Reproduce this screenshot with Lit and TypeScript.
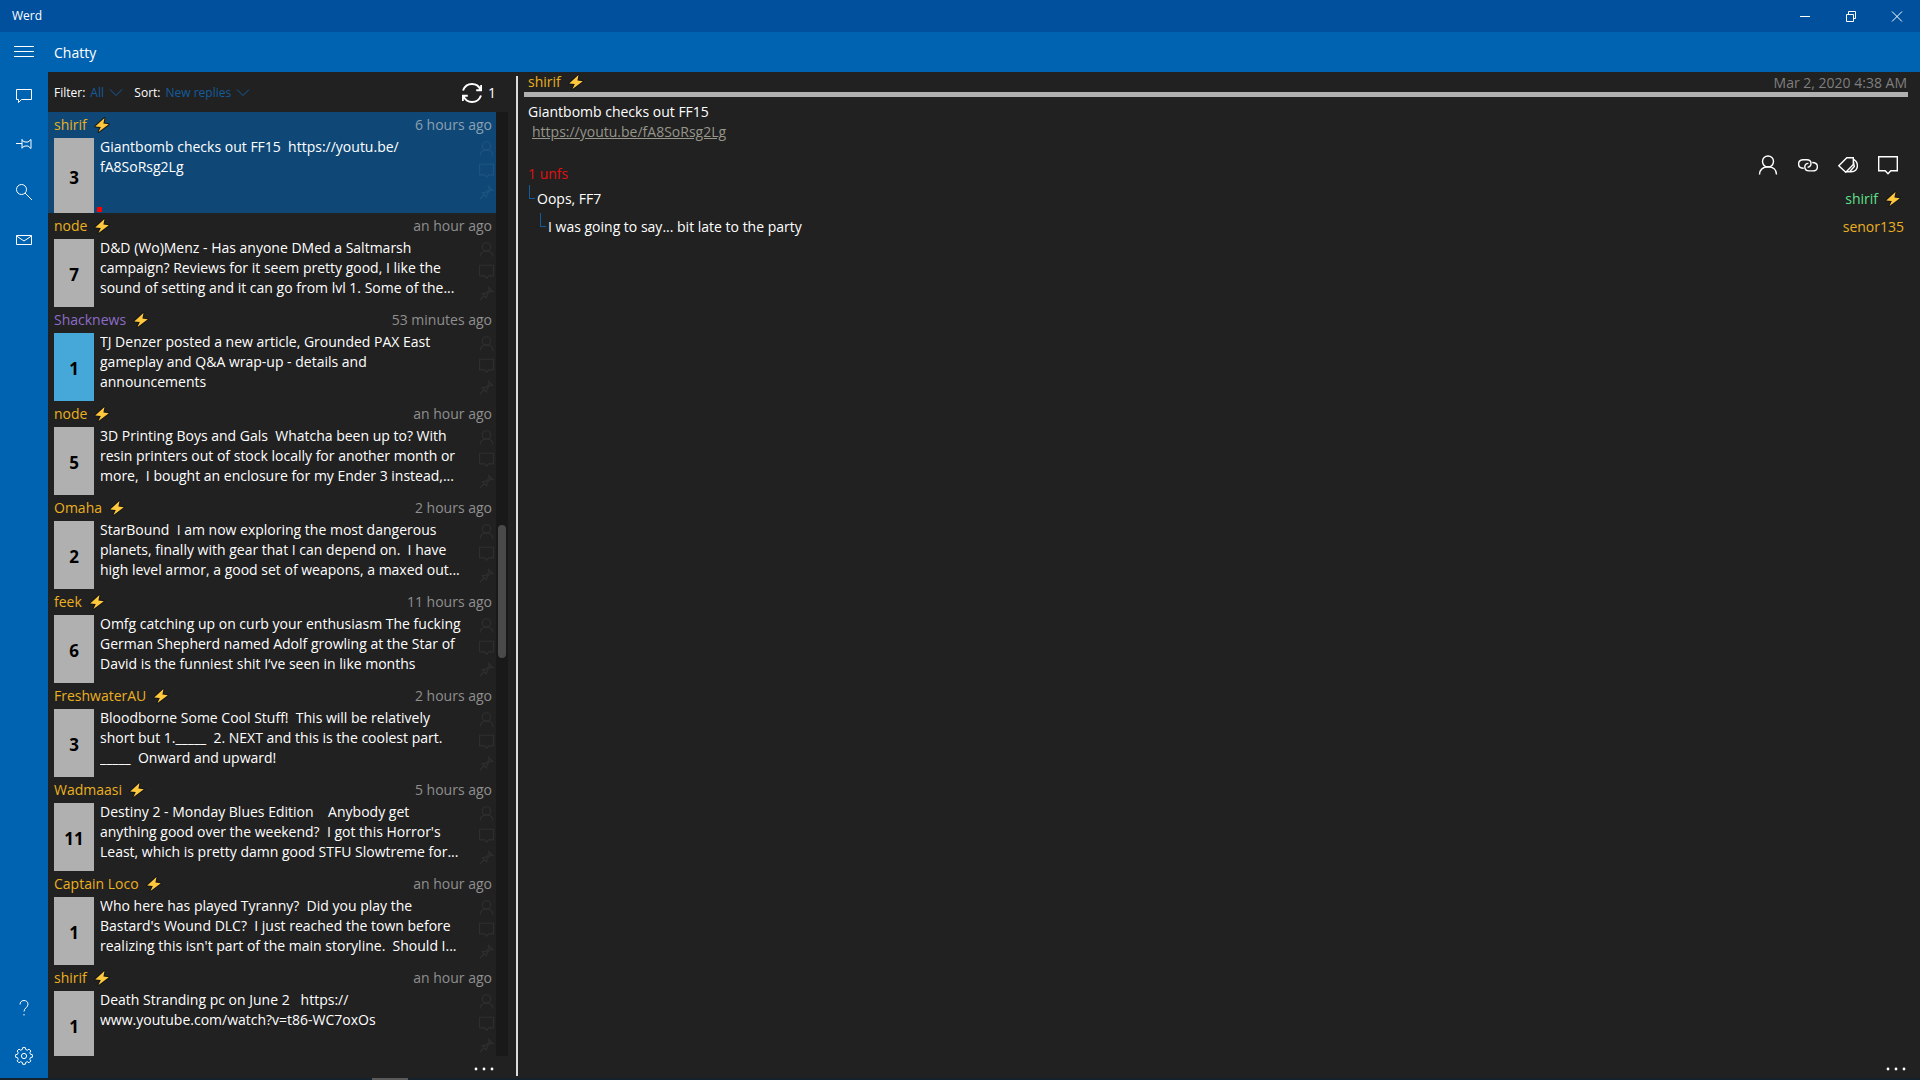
import { LitElement, html, css, svg, nothing } from "lit";
import { customElement, property } from "lit/decorators.js";
import { classMap } from "lit/directives/class-map.js";

interface Thread {
  author: string;
  kind?: string;
  age: string;
  count: number;
  lines: string[];
  selected?: boolean;
}

const threads: Thread[] = [
  { author: "shirif", age: "6 hours ago", count: 3, selected: true, lines: ["Giantbomb checks out FF15  https://youtu.be/", "fA8SoRsg2Lg"] },
  { author: "node", age: "an hour ago", count: 7, lines: ["D&D (Wo)Menz - Has anyone DMed a Saltmarsh", "campaign? Reviews for it seem pretty good, I like the", "sound of setting and it can go from lvl 1. Some of the..."] },
  { author: "Shacknews", kind: "news", age: "53 minutes ago", count: 1, lines: ["TJ Denzer posted a new article, Grounded PAX East", "gameplay and Q&A wrap-up - details and", "announcements"] },
  { author: "node", age: "an hour ago", count: 5, lines: ["3D Printing Boys and Gals  Whatcha been up to? With", "resin printers out of stock locally for another month or", "more,  I bought an enclosure for my Ender 3 instead,..."] },
  { author: "Omaha", age: "2 hours ago", count: 2, lines: ["StarBound  I am now exploring the most dangerous", "planets, finally with gear that I can depend on.  I have", "high level armor, a good set of weapons, a maxed out..."] },
  { author: "feek", age: "11 hours ago", count: 6, lines: ["Omfg catching up on curb your enthusiasm The fucking", "German Shepherd named Adolf growling at the Star of", "David is the funniest shit I‘ve seen in like months"] },
  { author: "FreshwaterAU", age: "2 hours ago", count: 3, lines: ["Bloodborne Some Cool Stuff!  This will be relatively", "short but 1._____  2. NEXT and this is the coolest part.", "_____  Onward and upward!"] },
  { author: "Wadmaasi", age: "5 hours ago", count: 11, lines: ["Destiny 2 - Monday Blues Edition    Anybody get", "anything good over the weekend?  I got this Horror's", "Least, which is pretty damn good STFU Slowtreme for..."] },
  { author: "Captain Loco", age: "an hour ago", count: 1, lines: ["Who here has played Tyranny?  Did you play the", "Bastard's Wound DLC?  I just reached the town before", "realizing this isn't part of the main storyline.  Should I..."] },
  { author: "shirif", age: "an hour ago", count: 1, lines: ["Death Stranding pc on June 2   https://", "www.youtube.com/watch?v=t86-WC7oxOs"] },
];

const shapes = {
  menu: svg`<path d="M0 4.5h20M0 9.5h20M0 14.5h20"/>`,
  chat: svg`<path d="M2.5 3.5h15v10H7.5l-3 3v-3h-2z"/>`,
  pinSide: svg`<path d="M2 9.5h6M8 5v9.500M8 6.500l3 1.500h3l3-2.500v9l-3-2.500h-3l-3 1.500"/>`,
  search: svg`<circle cx="7.500" cy="7.500" r="5"/><path d="M11 11l7 7"/>`,
  mail: svg`<path d="M2.500 5.500h15v9h-15zM2.500 6l7.500 5 7.500-5"/>`,
  help: svg`<path d="M6 6.500C6 4 7.700 2.500 10 2.500s4 1.500 4 3.700c0 3.300-4 3.800-4 7.300M10 16v1.500"/>`,
  gear: svg`<path d="M8.700 1.600h2.600l.4 1.900 1.700.7 1.600-1.100 1.900 1.900-1.100 1.700.7 1.600 1.900.4v2.500l-1.900.4-.7 1.700 1.100 1.600-1.900 1.900-1.600-1.100-1.700.7-.4 1.900H8.700l-.4-1.900-1.700-.7L5 16.800l-1.900-1.900 1.100-1.600-.7-1.700-1.900-.4V8.700l1.900-.4.7-1.600L3.100 5 5 3.100l1.600 1.100 1.700-.7z"/><circle cx="10" cy="10" r="2.600"/>`,
  person: svg`<circle cx="10" cy="6.500" r="5.500"/><path d="M1.500 19.500c0-4.700 3.500-7.700 8.500-7.700s8.500 3 8.500 7.700"/>`,
  link: svg`<path d="M5.800 13.300C2.500 13.300.6 11.600.6 9S2.500 4.700 5.300 4.700h3.600c2.600 0 4.100 1.600 4.100 3.800 0 2-1.400 3.500-3.400 3.700M14.200 7.500c3.300 0 5.200 1.600 5.200 4.200s-1.800 4.200-4.700 4.200h-3.600c-2.600 0-4.300-1.500-4.300-3.800 0-2 1.400-3.600 3.600-3.700"/>`,
  tag: svg`<path d="M.8 10.800l8-8.100h6.500v6.800l-7.500 7.800zM15.300 4.200c2.600 1.500 4.100 3.500 4.100 6.600 0 3.700-2.800 6-6 6H8.500M15.300 6l1 5.500-4.500 5"/>`,
  reply: svg`<path d="M.7 1.700h18.600v14.100h-6.500L10 18.800l-2.800-3H.7z"/>`,
  pin: svg`<path d="M1 19l6-6M3.500 9.500l7 7M5 10.500l4.500-1 4-4-.5-3.500 5.500 5.500-3.500-.5-4 4-1 4.500"/>`,
  refresh: svg`<path d="M1 7.500C2.500 3.500 5.800 1 10 1c4 0 7 2.200 8.600 5.800M19.200 2v5.200h-5M19 12.500c-1.500 4-4.800 6.500-9 6.500-4 0-7-2.200-8.600-5.800M.8 18v-5.200h5"/>`,
  minimize: svg`<path d="M5 10.500h10"/>`,
  restore: svg`<path d="M5.500 8.500h7v7h-7zM7.500 8v-2.500h7v7H13"/>`,
  close: svg`<path d="M5 5.500l10 10M15 5.500l-10 10"/>`,
  chevron: svg`<path d="M4 6.500l6 6 6-6"/>`,
};

const icon = (name: keyof typeof shapes) =>
  html`<svg class="icon" viewBox="0 0 20 20" aria-hidden="true">${shapes[name]}</svg>`;

const bolt = html`<svg class="bolt" viewBox="0 0 16 16" aria-hidden="true">
  <path d="M10.500 1L1.200 9.500l5.600.5L4.500 15 14.800 7.300 9.400 6.500z" />
</svg>`;

const base = css`
  * { box-sizing: border-box; }
  button {
    display: flex;
    align-items: center;
    justify-content: center;
    padding: 0;
    border: 0;
    background: none;
    color: inherit;
    font: inherit;
  }
  .icon {
    width: 20px;
    height: 20px;
    flex: none;
    fill: none;
    stroke: currentColor;
    stroke-width: 1;
  }
  .bolt {
    width: 16px;
    height: 16px;
    flex: none;
    overflow: visible;
    fill: #ffc83d;
    stroke: #161616;
    stroke-width: 2;
    stroke-linejoin: round;
    paint-order: stroke;
  }
  .author {
    display: flex;
    align-items: center;
    gap: 7px;
    color: #eab020;
  }
`;

@customElement("thread-item")
export class ThreadItem extends LitElement {
  @property({ attribute: false }) thread!: Thread;

  static styles = [
    base,
    css`
      :host { display: block; }
      .thread { padding-left: 6px; }
      .selected { background: #0f4876; }
      .head {
        display: flex;
        justify-content: space-between;
        height: 26px;
        padding-right: 4px;
      }
      .news { color: #8d6cc8; }
      .age { color: #8f8f8f; line-height: 26px; }
      .selected .age { color: #8ba0b0; }
      .row { display: flex; height: 68px; }
      .selected .row { height: 75px; }
      .count {
        width: 40px;
        flex: none;
        padding-top: 4px;
        background: #b0b0b0;
        color: #000;
        font-size: 17px;
        font-weight: 700;
      }
      .count.article { background: #46a8d8; }
      .mark { align-self: flex-end; width: 5px; height: 5px; margin: 0 -2px 1px 3px; background: #f00; }
      .text {
        flex: 1;
        min-width: 0;
        margin: -1px 0 0 6px;
        overflow: hidden;
        line-height: 20px;
        white-space: pre;
      }
      .mark + .text { margin-left: 0; }
      .actions {
        display: flex;
        flex-direction: column;
        gap: 7px;
        padding: 3px 2px 0 0;
        color: #fff;
        opacity: 0.06;
      }
      .actions .icon { width: 15px; height: 15px; stroke-width: 1.5; }
    `,
  ];

  render() {
    const t = this.thread;
    return html`
      <article class=${classMap({ thread: true, selected: !!t.selected })}>
        <header class="head">
          <span class=${classMap({ author: true, news: t.kind === "news" })}>${t.author}${bolt}</span>
          <span class="age">${t.age}</span>
        </header>
        <div class="row">
          <button class=${classMap({ count: true, article: t.kind === "news" })}>${t.count}</button>
          ${t.selected ? html`<span class="mark"></span>` : nothing}
          <div class="text">${t.lines.join("\n")}</div>
          <div class="actions">
            <button aria-label="Author">${icon("person")}</button>
            <button aria-label="Reply">${icon("reply")}</button>
            <button aria-label="Pin">${icon("pin")}</button>
          </div>
        </div>
      </article>
    `;
  }
}

@customElement("app-root")
export class AppRoot extends LitElement {
  static styles = [
    base,
    css`
      :host {
        display: flex;
        flex-direction: column;
        height: 100vh;
        overflow: hidden;
        background: #212121;
        color: #fff;
        font: 14px/20px "Open Sans", "Noto Sans", sans-serif;
      }
      .titlebar {
        display: flex;
        justify-content: space-between;
        align-items: center;
        height: 32px;
        flex: none;
        padding-left: 12px;
        background: #00509d;
        font-size: 12px;
      }
      .window-buttons { display: flex; }
      .window-buttons button { width: 46px; height: 32px; }
      .topbar {
        display: flex;
        align-items: center;
        gap: 6px;
        height: 40px;
        flex: none;
        background: #0063b1;
      }
      .topbar h1 { margin: 0; padding-top: 2px; font-size: 14px; font-weight: 400; }
      .topbar button { width: 48px; height: 40px; }
      .main { display: flex; flex: 1; min-height: 0; }
      .content { display: flex; flex: 1; min-width: 0; }
      .rail {
        display: flex;
        flex-direction: column;
        width: 48px;
        flex: none;
        margin-bottom: -2px;
        background: #0063b1;
      }
      .rail button { height: 48px; }
      .spacer { flex: 1; }
      .list-pane {
        display: flex;
        flex-direction: column;
        flex: 0 0 25%;
        padding-right: 8px;
        min-width: 0;
      }
      .filters {
        display: flex;
        align-items: center;
        height: 40px;
        flex: none;
        padding: 2px 12px 0 6px;
        font-size: 12px;
      }
      .field { display: flex; align-items: center; gap: 5px; margin-right: 8px; }
      .picker { display: flex; align-items: center; gap: 2px; color: #125c9e; }
      select {
        appearance: none;
        padding: 0;
        border: 0;
        background: none;
        color: inherit;
        font: inherit;
        opacity: 1;
      }
      .refresh { gap: 6px; font-size: 14px; }
      .refresh .icon { stroke-width: 2; }
      .scroll { display: flex; flex: 1; min-height: 0; }
      .threads {
        flex: 1;
        display: flex;
        flex-direction: column;
        min-width: 0;
        margin: 0;
        padding: 0;
        overflow: hidden;
        list-style: none;
      }
      .threads li { flex: none; }
      .track {
        display: grid;
        grid-template-rows: 413fr 133fr 398fr;
        width: 12px;
        flex: none;
        padding: 0 2px;
        background: #191919;
      }
      .thumb { grid-row: 2; border-radius: 4px; background: #4a4a4a; }
      .commands {
        display: flex;
        justify-content: flex-end;
        align-items: center;
        height: 22px;
        flex: none;
        padding-right: 14px;
      }
      .commands .icon { fill: currentColor; stroke: none; }
      .divider { width: 2px; flex: none; margin: 4px 0 2px; background: #dcdcdc; }
      .post-pane { display: flex; flex-direction: column; flex: 1; min-width: 0; }
      .post { flex: 1; padding: 0 12px 0 6px; }
      .post-head {
        display: flex;
        justify-content: space-between;
        height: 25px;
        padding-left: 4px;
        border-bottom: 5px solid #b0b0b0;
        line-height: 22px;
      }
      .post-head time { padding-right: 1px; color: #7f7f7f; }
      .upper { display: flex; justify-content: space-between; align-items: flex-end; }
      .body { padding: 5px 0 0 4px; }
      .body p { margin: 0; }
      .body .url { padding-left: 4px; }
      .body a { color: #96968a; }
      .body .votes { margin-top: 22px; color: #e01010; }
      .tools {
        display: flex;
        gap: 20px;
        padding: 0 10px 9px 0;
      }
      .tools .icon { stroke-width: 1.4; }
      .replies { margin: 0; padding: 0; list-style: none; }
      .reply {
        display: flex;
        align-items: flex-start;
        height: 28px;
      }
      .branch {
        width: 6px;
        height: 14px;
        margin: 1px 2px 0 5px;
        border: solid #125c9e;
        border-width: 0 0 1px 1px;
      }
      .nested .branch { margin-left: 16px; }
      .reply-text { flex: 1; padding-top: 5px; }
      .reply .author { padding: 5px 4px 0 0; }
      .reply .own { padding-right: 7px; color: #5ee08a; }
      .taskbar { height: 2px; flex: none; background: #14222c; z-index: 1; }
      .taskbar i { display: block; width: 36px; height: 2px; margin-left: 372px; background: #5a5a5a; }
    `,
  ];

  private dots() {
    return html`<svg class="icon" viewBox="0 0 20 20" aria-hidden="true">
      <circle cx="2" cy="12" r="1.400" /><circle cx="10" cy="12" r="1.400" /><circle cx="18" cy="12" r="1.400" />
    </svg>`;
  }

  render() {
    return html`
      <div class="titlebar">
        <span>Werd</span>
        <div class="window-buttons">
          <button aria-label="Minimize">${icon("minimize")}</button>
          <button aria-label="Restore">${icon("restore")}</button>
          <button aria-label="Close">${icon("close")}</button>
        </div>
      </div>
      <header class="topbar">
        <button aria-label="Menu">${icon("menu")}</button>
        <h1>Chatty</h1>
      </header>
      <div class="main">
        <nav class="rail">
          <button aria-label="Chatty">${icon("chat")}</button>
          <button aria-label="Pinned">${icon("pinSide")}</button>
          <button aria-label="Search">${icon("search")}</button>
          <button aria-label="Messages">${icon("mail")}</button>
          <div class="spacer"></div>
          <button aria-label="Help">${icon("help")}</button>
          <button aria-label="Settings">${icon("gear")}</button>
        </nav>
        <div class="content">
          <section class="list-pane">
            <div class="filters">
              <div class="field">
                <label for="filter">Filter:</label>
                <span class="picker"><select id="filter"><option>All</option></select>${icon("chevron")}</span>
              </div>
              <div class="field">
                <label for="sort">Sort:</label>
                <span class="picker"><select id="sort"><option>New replies</option></select>${icon("chevron")}</span>
              </div>
              <div class="spacer"></div>
              <button class="refresh" aria-label="Refresh, 1 new">${icon("refresh")}<span>1</span></button>
            </div>
            <div class="scroll">
              <ul class="threads">
                ${threads.map((t) => html`<li><thread-item .thread=${t}></thread-item></li>`)}
              </ul>
              <div class="track"><div class="thumb"></div></div>
            </div>
            <div class="commands"><button aria-label="More list commands">${this.dots()}</button></div>
          </section>
          <div class="divider"></div>
          <section class="post-pane">
            <article class="post">
              <header class="post-head">
                <span class="author">shirif${bolt}</span>
                <time datetime="2020-03-02T04:38">Mar 2, 2020 4:38 AM</time>
              </header>
              <div class="upper">
                <div class="body">
                  <p>Giantbomb checks out FF15</p>
                  <p class="url"><a href="https://youtu.be/fA8SoRsg2Lg">https://youtu.be/fA8SoRsg2Lg</a></p>
                  <p class="votes">1 unfs</p>
                </div>
                <div class="tools">
                  <button aria-label="Author">${icon("person")}</button>
                  <button aria-label="Copy link">${icon("link")}</button>
                  <button aria-label="Tag">${icon("tag")}</button>
                  <button aria-label="Reply">${icon("reply")}</button>
                </div>
              </div>
              <ul class="replies">
                <li class="reply">
                  <span class="branch"></span><span class="reply-text">Oops, FF7</span>
                  <span class="author own">shirif${bolt}</span>
                </li>
                <li class="reply nested">
                  <span class="branch"></span><span class="reply-text">I was going to say... bit late to the party</span>
                  <span class="author">senor135</span>
                </li>
              </ul>
            </article>
            <div class="commands"><button aria-label="More post commands">${this.dots()}</button></div>
          </section>
        </div>
      </div>
      <div class="taskbar"><i></i></div>
    `;
  }
}
